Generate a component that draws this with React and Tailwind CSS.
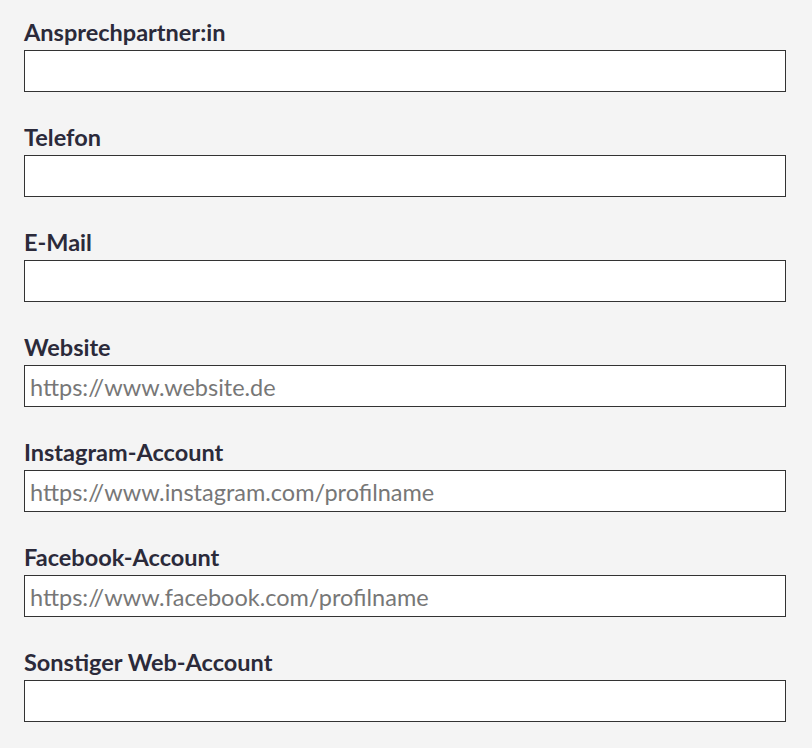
const fields = [
  { label: 'Ansprechpartner:in', placeholder: '' },
  { label: 'Telefon', placeholder: '' },
  { label: 'E-Mail', placeholder: '' },
  { label: 'Website', placeholder: 'https://www.website.de' },
  { label: 'Instagram-Account', placeholder: 'https://www.instagram.com/profilname' },
  { label: 'Facebook-Account', placeholder: 'https://www.facebook.com/profilname' },
  { label: 'Sonstiger Web-Account', placeholder: '' },
];

export default function App() {
  return (
    <div className="min-h-screen bg-[#f4f4f4] px-6 pt-[14px] font-['Lato',sans-serif]">
      <div className="flex flex-col gap-[27px]">
        {fields.map((field) => (
          <div key={field.label} className="flex flex-col">
            <label className="h-[36px] text-[23.5px] font-bold leading-[36px] text-[#2b2a3a]">
              {field.label}
            </label>
            <input
              type="text"
              placeholder={field.placeholder}
              className="h-[42px] w-[762px] border border-[#333] bg-white px-[5px] pt-[2px] text-[23.5px] text-[#333] placeholder:text-[#777] focus:outline-none"
            />
          </div>
        ))}
      </div>
    </div>
  );
}
